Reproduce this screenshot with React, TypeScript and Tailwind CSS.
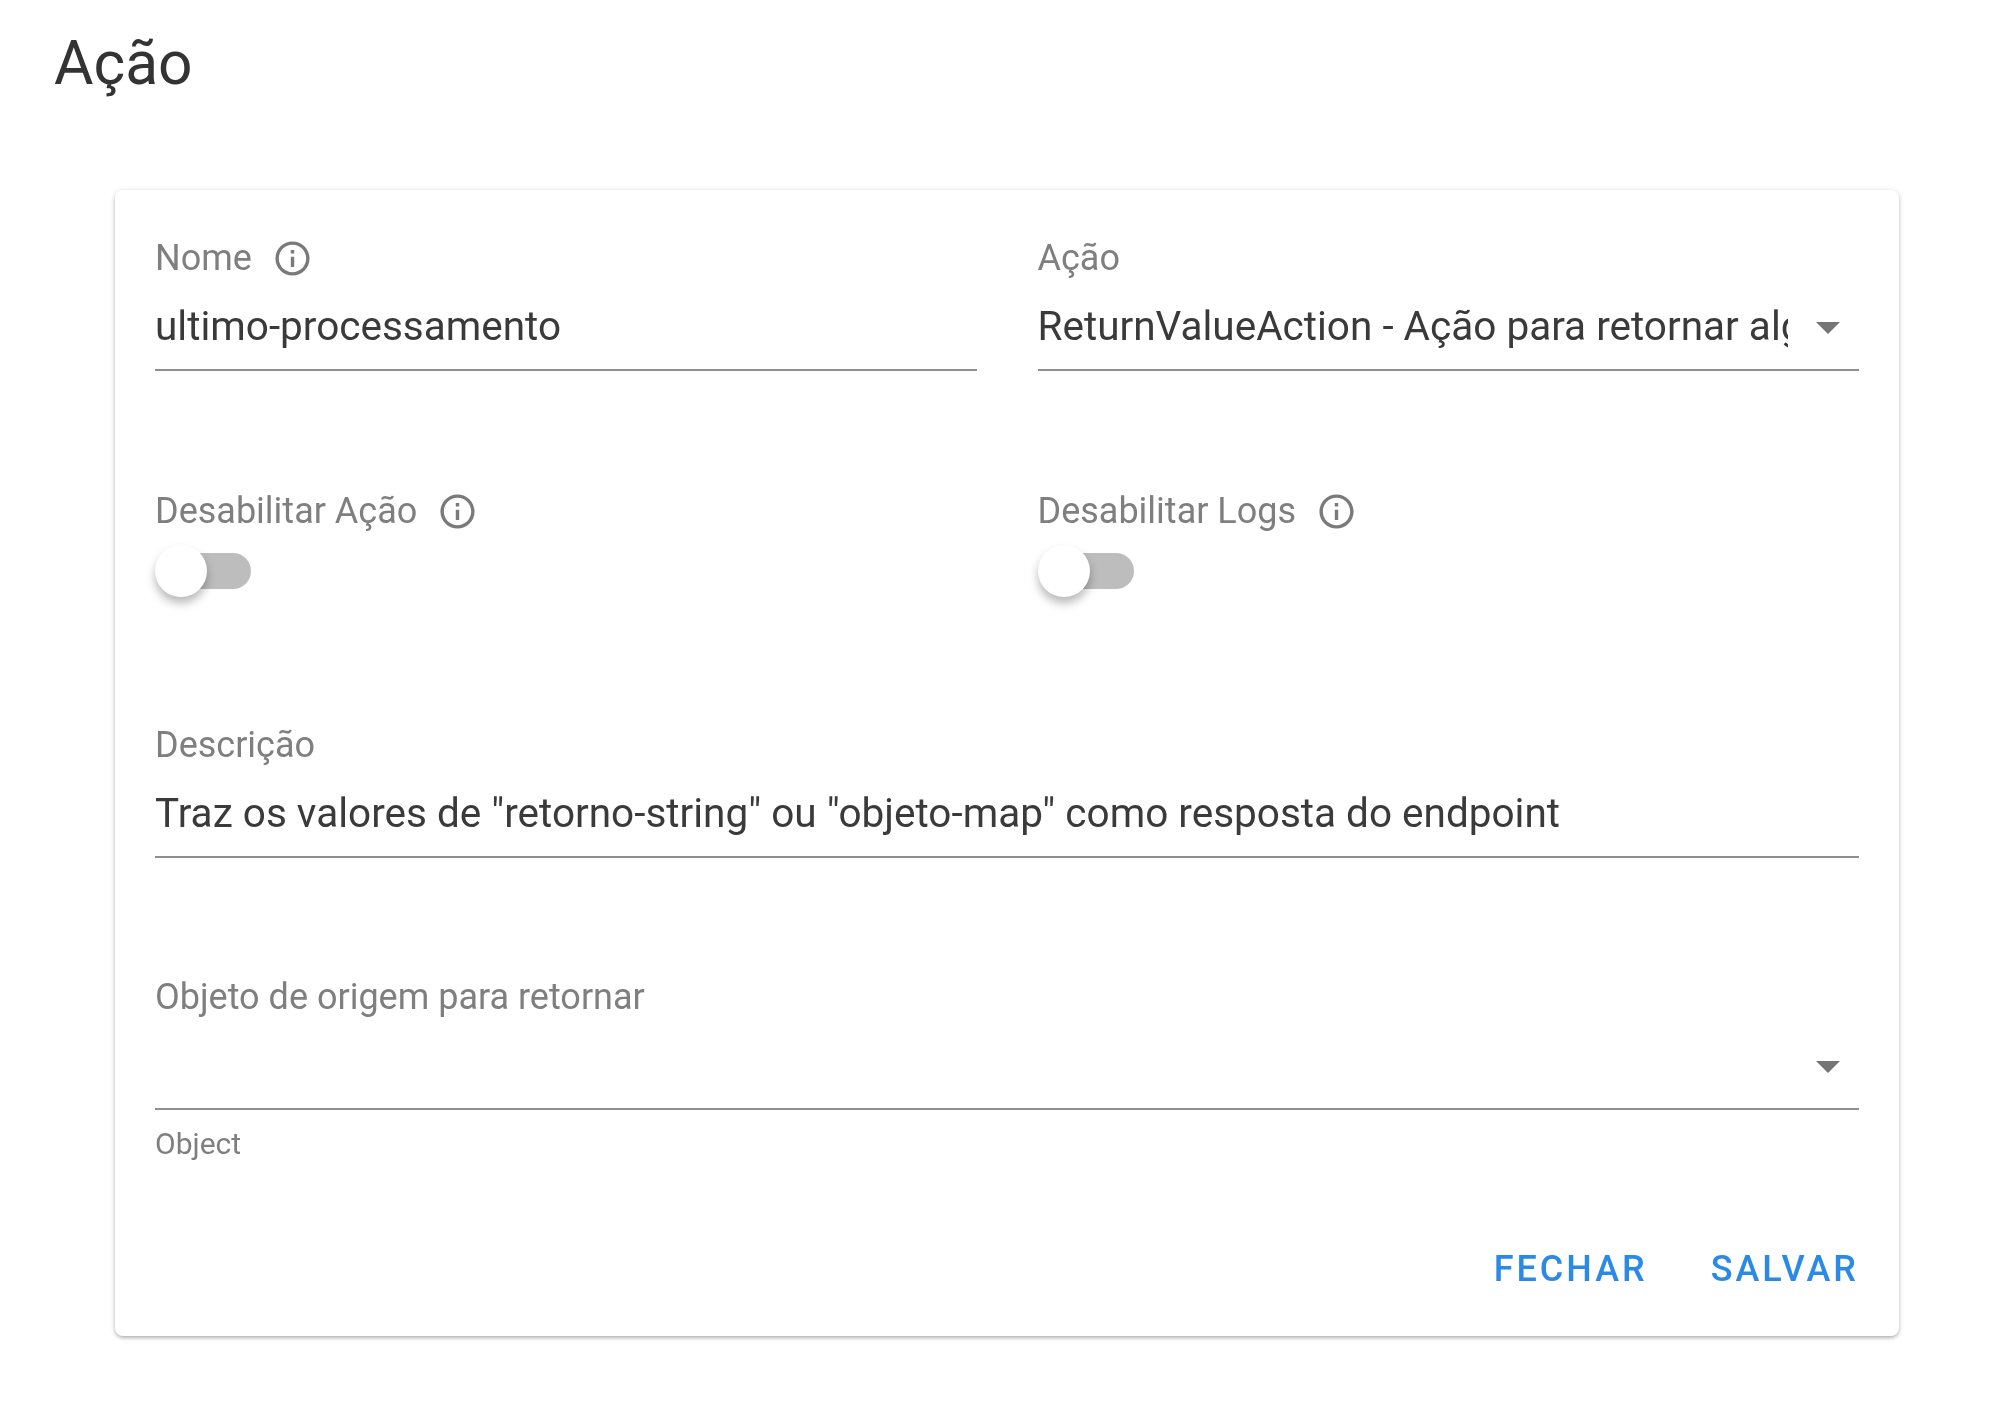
const InfoIcon = () => (
  <svg viewBox="0 0 24 24" className="w-[41px] h-[41px] ml-[20px] mt-[2px] shrink-0" fill="#7a7a7a">
    <path d="M11 7h2v2h-2zm0 4h2v6h-2zm1-9C6.48 2 2 6.48 2 12s4.48 10 10 10 10-4.48 10-10S17.52 2 12 2zm0 18c-4.41 0-8-3.59-8-8s3.59-8 8-8 8 3.59 8 8-3.59 8-8 8z" />
  </svg>
);

const Arrow = () => (
  <div className="w-0 h-0 mt-[3px] border-l-[12px] border-r-[12px] border-t-[12px] border-l-transparent border-r-transparent border-t-[#757575]" />
);

const Label = ({ text, info }: { text: string; info?: boolean }) => (
  <div className="flex items-center h-[36px] text-[36px] leading-[36px] text-[#7f7f7f]">
    <span className="pt-[2px]">{text}</span>
    {info && <InfoIcon />}
  </div>
);

const Toggle = () => (
  <div className="relative w-[96px] h-[52px] mt-[17px]">
    <div className="absolute left-[20px] right-0 top-[8px] h-[36px] rounded-full bg-[#bdbdbd]" />
    <div className="absolute left-0 top-0 w-[52px] h-[52px] rounded-full bg-white shadow-[0_6px_10px_rgba(0,0,0,0.28)]" />
  </div>
);

export default function App() {
  return (
    <div className="w-[2000px] h-[1420px] bg-white overflow-hidden font-['Roboto',sans-serif] pt-[29px] blur-[0.5px]">
      <h1 className="ml-[54px] text-[60.5px] leading-[70px] font-normal text-[#333333]">Ação</h1>

      <div className="ml-[115px] mt-[91px] w-[1784px] h-[1146px] rounded-[8px] bg-white shadow-[0_2px_4px_-1px_rgba(0,0,0,0.35),0_1px_6px_rgba(0,0,0,0.1)] px-[40px] pt-[49px]">
        <div className="grid grid-cols-2 gap-x-[61px]">
          <div>
            <Label text="Nome" info />
            <div className="h-[96px] border-b-2 border-[#8f8f8f] pt-[27px] text-[40.5px] leading-[48px] text-[#3a3a3a]">
              ultimo-processamento
            </div>
          </div>
          <div>
            <Label text="Ação" />
            <div className="h-[96px] border-b-2 border-[#8f8f8f] pt-[8px] text-[40.5px] leading-[48px] text-[#3a3a3a] flex items-center justify-between pr-[19px]">
              <span className="w-[750px] overflow-hidden whitespace-nowrap">ReturnValueAction - Ação para retornar algum valor</span>
              <Arrow />
            </div>
          </div>
        </div>

        <div className="grid grid-cols-2 gap-x-[61px] mt-[121px]">
          <div>
            <Label text="Desabilitar Ação" info />
            <Toggle />
          </div>
          <div>
            <Label text="Desabilitar Logs" info />
            <Toggle />
          </div>
        </div>

        <div className="mt-[129px]">
          <Label text="Descrição" />
          <div className="h-[96px] border-b-2 border-[#8f8f8f] pt-[27px] text-[40.5px] leading-[48px] text-[#3a3a3a]">
            Traz os valores de "retorno-string" ou "objeto-map" como resposta do endpoint
          </div>
        </div>

        <div className="mt-[120px]">
          <Label text="Objeto de origem para retornar" />
          <div className="h-[96px] border-b-2 border-[#8f8f8f] pt-[8px] flex items-center justify-end pr-[19px]">
            <Arrow />
          </div>
          <div className="mt-[18px] text-[30px] leading-[32px] text-[#7f7f7f]">Object</div>
        </div>

        <div className="flex justify-end gap-[63px] mt-[87px] text-[36px] leading-[44px] font-medium tracking-[3px] text-[#2a8ae6]">
          <span>FECHAR</span>
          <span>SALVAR</span>
        </div>
      </div>
    </div>
  );
}
